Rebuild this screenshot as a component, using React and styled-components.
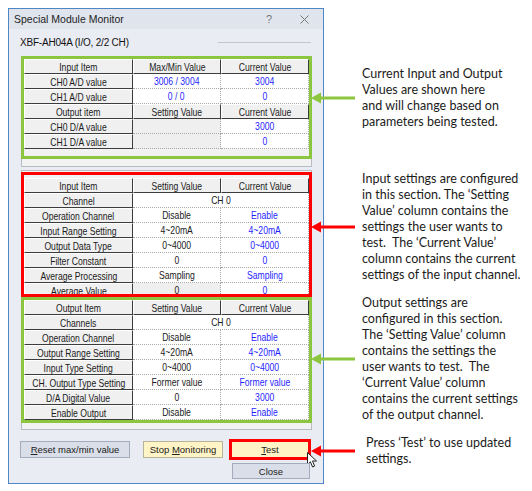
import React from 'react'
import styled, { createGlobalStyle, css } from 'styled-components'

const GREEN = '#8cc63f'
const RED = '#ff0000'
const BLUE = '#1f1fff'

const GlobalStyle = createGlobalStyle`
  html, body { margin: 0; padding: 0; background: #ffffff; }
  body { font-family: "Liberation Sans", Arial, sans-serif; }
`

// table data
const head = (a, b, c) => ({ head: true, cells: [a, b, c] })
const row = (label, set, cur, opt = {}) => ({ label, set, cur, ...opt })

const monitorRows = [
  head('Input Item', 'Max/Min Value', 'Current Value'),
  row('CH0 A/D value', '3006 / 3004', '3004', { setBlue: true }),
  row('CH1 A/D value', '0 / 0', '0', { setBlue: true }),
  head('Output item', 'Setting Value', 'Current Value'),
  row('CH0 D/A value', '', '3000', { setOff: true }),
  row('CH1 D/A value', '', '0', { setOff: true }),
]

const inputRows = [
  head('Input Item', 'Setting Value', 'Current Value'),
  row('Channel', 'CH 0', null),
  row('Operation Channel', 'Disable', 'Enable'),
  row('Input Range Setting', '4~20mA', '4~20mA'),
  row('Output Data Type', '0~4000', '0~4000'),
  row('Filter Constant', '0', '0'),
  row('Average Processing', 'Sampling', 'Sampling'),
  row('Average Value', '0', '0', { setOff: true }),
]

const outputRows = [
  head('Output Item', 'Setting Value', 'Current Value'),
  row('Channels', 'CH 0', null),
  row('Operation Channel', 'Disable', 'Enable'),
  row('Output Range Setting', '4~20mA', '4~20mA'),
  row('Input Type Setting', '0~4000', '0~4000'),
  row('CH. Output Type Setting', 'Former value', 'Former value'),
  row('D/A Digital Value', '0', '3000'),
  row('Enable Output', 'Disable', 'Enable'),
]

const notes = [
  {
    color: GREEN, gap: 0, indent: 0,
    lines: ['Current Input and Output', 'Values are shown here', 'and will change based on', 'parameters being tested.'],
  },
  {
    color: RED, gap: 41, indent: 0,
    lines: [
      'Input settings are configured',
      'in this section. The \u2018Setting',
      'Value\u2019 column contains the',
      'settings the user wants to',
      'test.  The \u2018Current Value\u2019',
      'column contains the current',
      'settings of the input channel.',
    ],
  },
  {
    color: GREEN, gap: 12, indent: 0,
    lines: [
      'Output settings are',
      'configured in this section.',
      'The \u2018Setting Value\u2019 column',
      'contains the settings the',
      'user wants to test.  The',
      '\u2018Current Value\u2019 column',
      'contains the current settings',
      'of the output channel.',
    ],
  },
  {
    color: RED, gap: 12, indent: 4,
    lines: ['Press \u2018Test\u2019 to use updated', 'settings.'],
  },
]

function TableRows({ rows }) {
  return (
    <Grid>
      {rows.map((r, i) =>
        r.head ? (
          r.cells.map((c, j) => (
            <Cell key={i + '-' + j} $raised><CellText>{c}</CellText></Cell>
          ))
        ) : (
          <React.Fragment key={i}>
            <Cell $raised><CellText>{r.label}</CellText></Cell>
            {r.cur === null ? (
              <Cell $span={2}><CellText>{r.set}</CellText></Cell>
            ) : (
              <>
                <Cell $off={r.setOff} $blue={r.setBlue}><CellText>{r.set}</CellText></Cell>
                <Cell $blue><CellText>{r.cur}</CellText></Cell>
              </>
            )}
          </React.Fragment>
        )
      )}
    </Grid>
  )
}

function Arrow({ color }) {
  return (
    <svg width="44" height="12" viewBox="0 0 44 12">
      <line x1="8" y1="6" x2="44" y2="6" stroke={color} strokeWidth="3" />
      <polygon points="0,6 10,0.5 10,11.5" fill={color} />
    </svg>
  )
}

function Pointer() {
  return (
    <Cursor width="12" height="17" viewBox="0 0 12 17">
      <path d="M0.5 0.5 L0.5 12.5 L3.4 9.8 L5.6 15 L7.6 14.1 L5.5 9 L9.5 9 Z" fill="#fff" stroke="#222" strokeWidth="1" />
    </Cursor>
  )
}

export default function App() {
  return (
    <Page>
      <GlobalStyle />
      <Dialog>
        <TitleBar>
          <Title>Special Module Monitor</Title>
          <Help>?</Help>
          <svg width="9" height="9" viewBox="0 0 9 9">
            <path d="M0.5 0.5 L8.5 8.5 M8.5 0.5 L0.5 8.5" stroke="#777" strokeWidth="1" />
          </svg>
        </TitleBar>
        <ModuleRow>
          <ModuleName>XBF-AH04A (I/O, 2/2 CH)</ModuleName>
          <Rule />
        </ModuleRow>

        <ListPanel $padTop={0} $padBottom={7}>
          <Frame $color={GREEN} $pull $padBottom={7}>
            <TableRows rows={monitorRows} />
          </Frame>
        </ListPanel>

        <ListPanel $gapTop={3} $padTop={1} $padBottom={6}>
          <Frame $color={RED} $clip>
            <TableRows rows={inputRows} />
          </Frame>
          <Frame $color={GREEN}>
            <TableRows rows={outputRows} />
          </Frame>
        </ListPanel>

        <ButtonArea>
          <Button $w={110}><span><u>R</u>eset max/min value</span></Button>
          <Button $w={80} $yellow><span>Stop <u>M</u>onitoring</span></Button>
          <ButtonStack>
            <Button $w={78} $yellow $marked>
              <span><u>T</u>est</span>
              <Pointer />
            </Button>
            <Button $w={78} $h={16} $shift><span>Close</span></Button>
          </ButtonStack>
        </ButtonArea>
      </Dialog>

      <Notes>
        {notes.map((n, i) => (
          <Note key={i} $gap={n.gap}>
            <Arrow color={n.color} />
            <NoteText $indent={n.indent}>
              {n.lines.map((l, j) => <Line key={j}>{l}</Line>)}
            </NoteText>
          </Note>
        ))}
      </Notes>
    </Page>
  )
}

// === Styles === //
const Page = styled.div`
  display: flex;
  align-items: flex-start;
  width: 532px;
  height: 491px;
  overflow: hidden;
`

const Dialog = styled.div`
  box-sizing: border-box;
  width: 316px;
  height: 476px;
  margin: 8px 0 0 8px;
  border: 1px solid #4f86c6;
  background: #eaecf4;
  display: flex;
  flex-direction: column;
  flex-shrink: 0;
`

const TitleBar = styled.div`
  height: 20px;
  display: flex;
  align-items: center;
  padding: 0 14px 0 5px;
  background: #dfe4ed;
`

const Title = styled.div`
  flex: 1;
  font-size: 10.5px;
  color: #1e1e1e;
`

const Help = styled.div`
  font-size: 11px;
  color: #777;
  margin-right: 28px;
`

const ModuleRow = styled.div`
  height: 27px;
  display: flex;
  align-items: center;
  padding: 0 12px 0 11px;
`

const ModuleName = styled.div`
  font-size: 10px;
  letter-spacing: -0.2px;
  color: #111;
`

const Rule = styled.div`
  margin-left: auto;
  width: 93px;
  height: 1px;
  background: #c3c6cf;
`

const ListPanel = styled.div`
  margin: ${p => p.$gapTop || 0}px 11px 0 12px;
  padding: ${p => p.$padTop}px 0 ${p => p.$padBottom}px;
  background: #f2f2f2;
  border: 1px solid #b9bbc2;
`

// annotation box drawn round a group of rows
const Frame = styled.div`
  position: relative;
  margin: ${p => (p.$pull ? '-1px' : '0')} -1px 0;
  border: 3px solid ${p => p.$color};
  padding-bottom: ${p => p.$padBottom || 0}px;
  ${p =>
    p.$clip &&
    css`
      height: 116px;
      padding-top: 3px;
      box-sizing: content-box;
      overflow: hidden;
    `}
`

const Grid = styled.div`
  display: grid;
  grid-template-columns: 109px 88px 88px;
  grid-auto-rows: 15px;
`

const Cell = styled.div`
  grid-column: span ${p => p.$span || 1};
  box-sizing: border-box;
  display: flex;
  align-items: center;
  justify-content: center;
  white-space: nowrap;
  overflow: hidden;
  font-size: 10.5px;
  color: ${p => (p.$blue ? BLUE : '#1a1a1a')};
  ${p =>
    p.$raised
      ? css`
          background: #f0f0f0;
          border-top: 1px solid #ffffff;
          border-left: 1px solid #ffffff;
          border-right: 1px solid #3c3c3c;
          border-bottom: 1px solid #3c3c3c;
        `
      : css`
          background: ${p.$off ? '#efefef' : '#ffffff'};
          border-right: 1px dotted #a8a8a8;
          border-bottom: 1px dotted #a8a8a8;
        `}
`

// the dialog font is a narrow sans; squeeze Arial to its width
const CellText = styled.span`
  display: inline-block;
  flex-shrink: 0;
  transform: scaleX(0.82);
`

const ButtonArea = styled.div`
  display: flex;
  align-items: flex-start;
  gap: 13px;
  margin-top: 11px;
  padding-left: 11px;
`

const ButtonStack = styled.div`
  display: flex;
  flex-direction: column;
  gap: 5px;
  margin-left: -5px;
`

const Button = styled.div`
  position: relative;
  box-sizing: border-box;
  width: ${p => p.$w}px;
  height: ${p => p.$h || 17}px;
  margin-left: ${p => (p.$shift ? 1 : 0)}px;
  display: flex;
  align-items: center;
  justify-content: center;
  font-size: 9.5px;
  color: #222;
  background: ${p => (p.$yellow ? '#fff4c6' : '#d9dee9')};
  border: 1px solid ${p => (p.$yellow ? '#b9b498' : '#a4abbd')};
  ${p =>
    p.$marked &&
    css`
      outline: 3px solid ${RED};
      outline-offset: -1px;
    `}
  u { text-underline-offset: 1px; }
`

const Cursor = styled.svg`
  position: absolute;
  left: 75px;
  top: 10px;
`

const Notes = styled.div`
  position: relative;
  z-index: 1;
  margin-left: -13px;
  padding-top: 66px;
  display: flex;
  flex-direction: column;
`

const Note = styled.div`
  display: flex;
  align-items: center;
  margin-top: ${p => p.$gap}px;
`

const NoteText = styled.div`
  margin-left: ${p => 7 + p.$indent}px;
  font-family: Lato, "Liberation Sans", sans-serif;
  font-size: 12.5px;
  line-height: 16px;
  color: #1b1b1b;
`

const Line = styled.div`
  white-space: pre;
`
